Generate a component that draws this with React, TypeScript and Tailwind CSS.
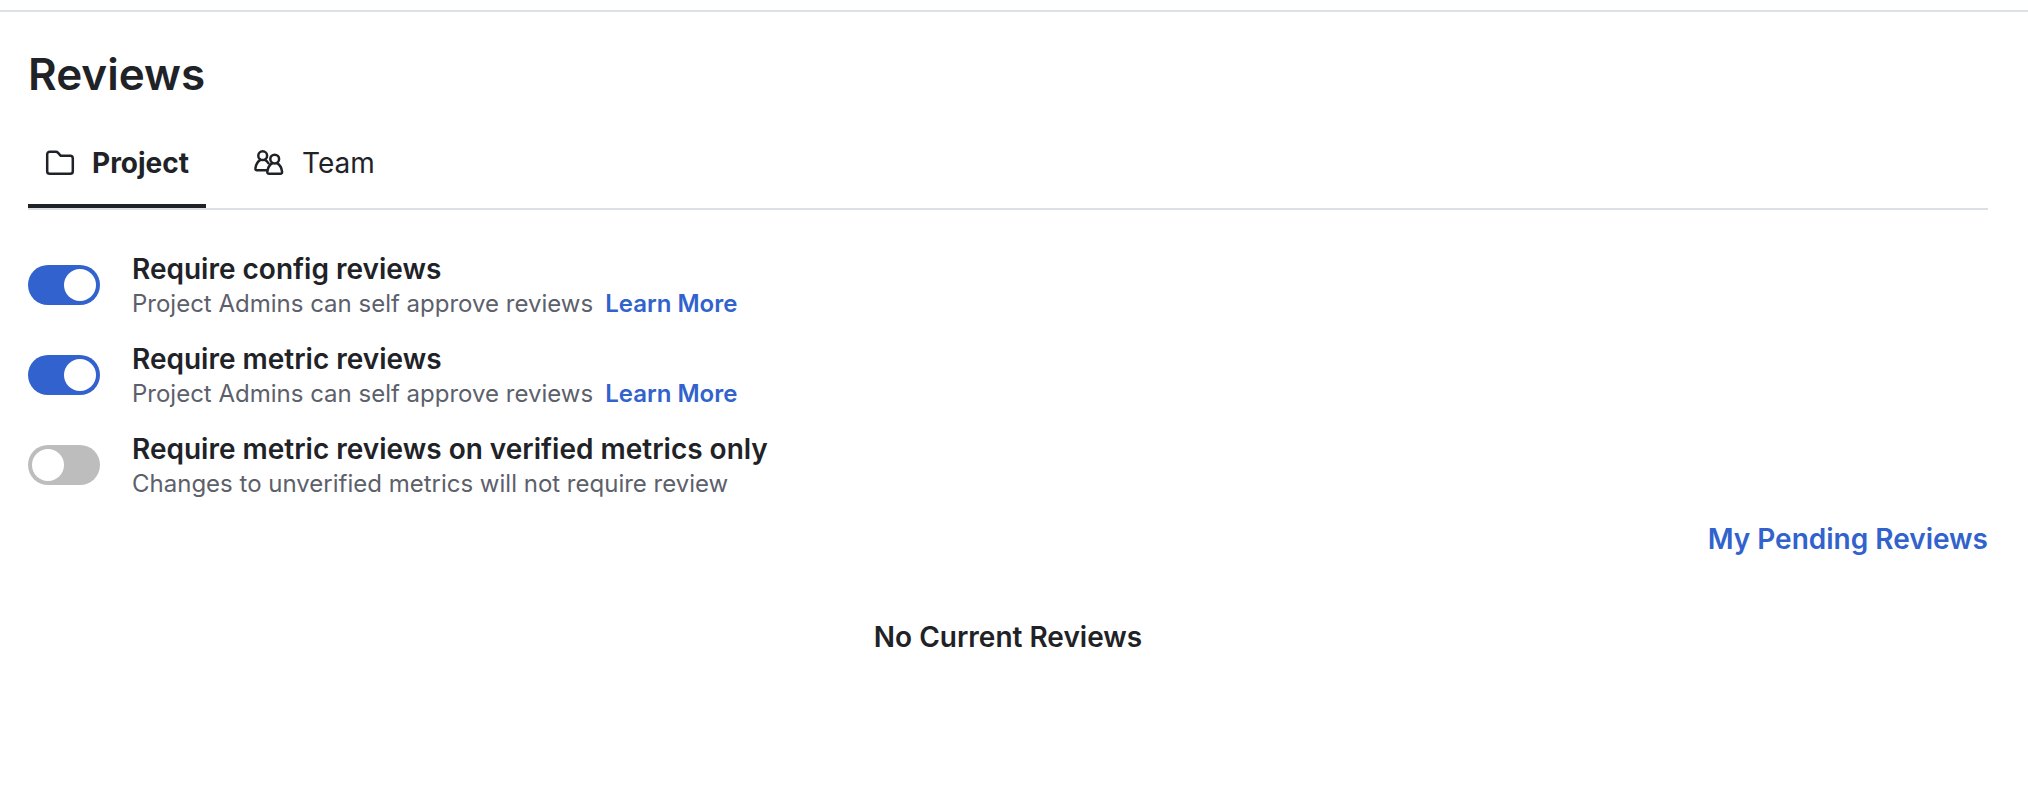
import { useState } from "react";

function FolderIcon() {
  return (
    <svg width="32" height="32" viewBox="0 0 32 32" fill="none" stroke="currentColor" strokeWidth="2.5" strokeLinejoin="round">
      <path d="M3.200 7.100v17.100a2.600 2.600 0 0 0 2.600 2.600h20.400a2.600 2.600 0 0 0 2.600-2.600V11.400a2.600 2.600 0 0 0-2.600-2.600H16.800l-2.900-3.200c-.500-.600-1.200-.900-2-.900H5.800A2.500 2.500 0 0 0 3.200 7.100Z" />
    </svg>
  );
}

function TeamIcon() {
  return (
    <svg width="32" height="32" viewBox="0 0 32 32" fill="none" stroke="currentColor" strokeWidth="2.5" strokeLinejoin="round" strokeLinecap="round">
      <circle cx="8.700" cy="8.700" r="4.400" />
      <path d="M12.300 23.300H3c-1.200 0-1.800-.800-1.600-1.900.500-3.900 2.300-7 5.100-8.500M10.900 12.900c1.500.800 2.700 1.900 3.600 3.400" />
      <circle cx="20.700" cy="12.100" r="4.400" />
      <path d="M18.500 16.200c-2.900 1.500-4.700 4.600-5.200 8.600-.100 1.200.500 2 1.700 2h11.400c1.200 0 1.800-.800 1.700-2-.500-4-2.300-7.100-5.200-8.600" />
    </svg>
  );
}

function Toggle({ on, onChange }: { on: boolean; onChange: () => void }) {
  return (
    <button
      role="switch"
      aria-checked={on}
      onClick={onChange}
      className={`flex h-10 w-[72px] shrink-0 items-center rounded-full p-1 ${on ? "justify-end bg-[#3162cd]" : "justify-start bg-[#bdbdbd]"}`}
    >
      <span className="size-8 rounded-full bg-white" />
    </button>
  );
}

const settings = [
  { title: "Require config reviews", note: "Project Admins can self approve reviews", link: true, on: true },
  { title: "Require metric reviews", note: "Project Admins can self approve reviews", link: true, on: true },
  { title: "Require metric reviews on verified metrics only", note: "Changes to unverified metrics will not require review", link: false, on: false },
];

export default function App() {
  const [values, setValues] = useState(settings.map((s) => s.on));
  return (
    <div className="min-h-[792px] bg-white pt-2.5 font-['Inter',sans-serif] text-[28px] text-[#1f2328]">
      <main className="border-t-2 border-[#dce0e7] pr-10 pl-7">
        <h1 className="mt-9 text-[44px] leading-[52px] font-semibold">Reviews</h1>
        <div className="mt-5 flex h-[90px] border-b-2 border-[#dce0e6]">
          <button className="flex h-[88px] w-[178px] items-center gap-4 border-b-4 border-[#1f2328] pt-0.5 pl-4 font-bold">
            <FolderIcon />
            Project
          </button>
          <button className="ml-12 flex h-[84px] items-center gap-4 pt-0.5">
            <TeamIcon />
            Team
          </button>
        </div>
        <div className="mt-[30px]">
          {settings.map((s, i) => (
            <div key={s.title} className="flex h-[90px] items-center gap-8">
              <Toggle on={values[i]} onChange={() => setValues(values.map((v, j) => (j === i ? !v : v)))} />
              <div className="pt-[3px]">
                <div className="leading-[34px] font-semibold">{s.title}</div>
                <div className="flex gap-3 pt-px text-2xl leading-[34px] text-[#5c606b]">
                  {s.note}
                  {s.link && (
                    <a href="#" className="font-semibold text-[#3162cd]">
                      Learn More
                    </a>
                  )}
                </div>
              </div>
            </div>
          ))}
        </div>
        <div className="mt-3 flex justify-end">
          <a href="#" className="leading-[34px] font-semibold text-[#3162cd]">
            My Pending Reviews
          </a>
        </div>
        <p className="mt-16 text-center leading-[34px] font-semibold">No Current Reviews</p>
      </main>
    </div>
  );
}
